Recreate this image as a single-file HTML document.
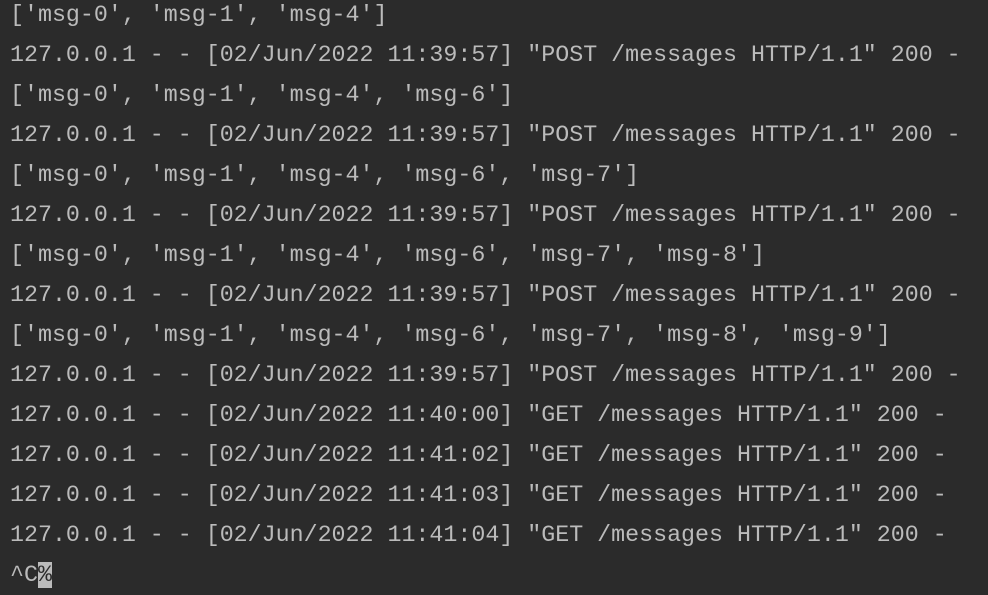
<!DOCTYPE html>
<html><head><meta charset="utf-8"><style>
html,body{margin:0;padding:0;width:988px;height:568px;overflow:hidden;background:#2b2b2b;}
.t{position:absolute;left:10px;top:-5px;font-family:"Liberation Mono",monospace;font-size:23.3px;line-height:40px;color:#bbbbbb;white-space:pre;}
.cur{background:#bbbbbb;color:#2b2b2b;}
</style></head><body>
<div class="t">['msg-0', 'msg-1', 'msg-4']
127.0.0.1 - - [02/Jun/2022 11:39:57] "POST /messages HTTP/1.1" 200 -
['msg-0', 'msg-1', 'msg-4', 'msg-6']
127.0.0.1 - - [02/Jun/2022 11:39:57] "POST /messages HTTP/1.1" 200 -
['msg-0', 'msg-1', 'msg-4', 'msg-6', 'msg-7']
127.0.0.1 - - [02/Jun/2022 11:39:57] "POST /messages HTTP/1.1" 200 -
['msg-0', 'msg-1', 'msg-4', 'msg-6', 'msg-7', 'msg-8']
127.0.0.1 - - [02/Jun/2022 11:39:57] "POST /messages HTTP/1.1" 200 -
['msg-0', 'msg-1', 'msg-4', 'msg-6', 'msg-7', 'msg-8', 'msg-9']
127.0.0.1 - - [02/Jun/2022 11:39:57] "POST /messages HTTP/1.1" 200 -
127.0.0.1 - - [02/Jun/2022 11:40:00] "GET /messages HTTP/1.1" 200 -
127.0.0.1 - - [02/Jun/2022 11:41:02] "GET /messages HTTP/1.1" 200 -
127.0.0.1 - - [02/Jun/2022 11:41:03] "GET /messages HTTP/1.1" 200 -
127.0.0.1 - - [02/Jun/2022 11:41:04] "GET /messages HTTP/1.1" 200 -
^C<span class="cur">%</span></div>
</body></html>
